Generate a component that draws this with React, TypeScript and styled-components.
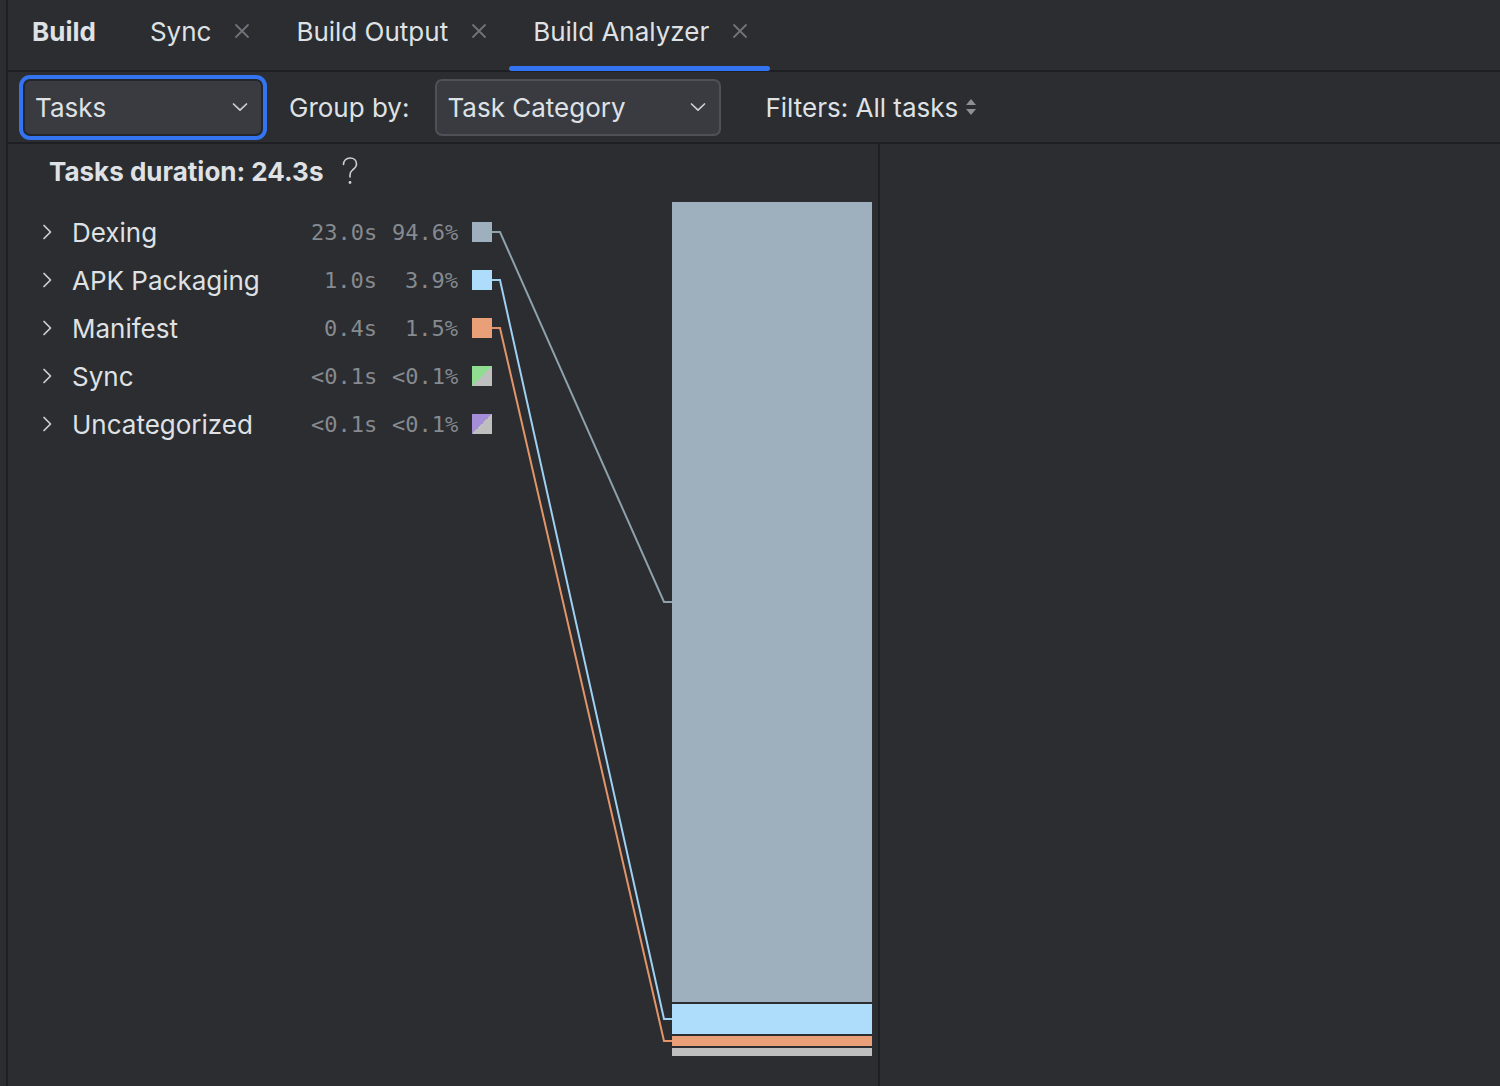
import React from "react";
import styled, { createGlobalStyle } from "styled-components";

const Global = createGlobalStyle`
  html, body { margin: 0; padding: 0; background: #2b2d30; }
  body { font-family: Inter, "Noto Sans", sans-serif; color: #dfe1e5; }
  * { box-sizing: border-box; }
`;

const Frame = styled.div`
  display: flex;
  width: 1500px;
  height: 1086px;
  background: #2b2d30;
  overflow: hidden;
`;

const Gutter = styled.div`
  flex: none;
  width: 8px;
  border-right: 2px solid #1e1f22;
`;

const Main = styled.div`
  flex: 1;
  min-width: 0;
  display: flex;
  flex-direction: column;
`;

/* ---------- tabs ---------- */
const TabBar = styled.div`
  flex: none;
  display: flex;
  height: 72px;
  border-bottom: 2px solid #1e1f22;
`;

const TabTitle = styled.div`
  height: 62px;
  display: flex;
  align-items: center;
  padding: 0 30px 0 24px;
  font-size: 26px;
  font-weight: 700;
  color: #dfe1e5;
`;

const Tab = styled.div`
  display: flex;
  flex-direction: column;
  height: 70px;
`;

const TabLabel = styled.div`
  height: 62px;
  display: flex;
  align-items: center;
  gap: 23px;
  padding: 0 22px 0 24px;
  font-size: 26px;
  color: #dfe1e5;
  white-space: nowrap;
`;

const Underline = styled.div<{ $active?: boolean }>`
  margin-top: auto;
  margin-bottom: -1px;
  height: 5px;
  border-radius: 3px;
  background: ${(p) => (p.$active ? "#3574f0" : "transparent")};
`;

const CloseIcon = () => (
  <svg width="16" height="16" viewBox="0 0 16 16">
    <path d="M2 2 L14 14 M14 2 L2 14" stroke="#6f737a" strokeWidth="1.8" strokeLinecap="round" />
  </svg>
);

/* ---------- toolbar ---------- */
const Toolbar = styled.div`
  flex: none;
  display: flex;
  align-items: center;
  gap: 26px;
  height: 72px;
  padding-left: 15px;
  border-bottom: 2px solid #1e1f22;
`;

const Combo = styled.div<{ $w: number; $focused?: boolean }>`
  width: ${(p) => p.$w}px;
  height: 57px;
  display: flex;
  align-items: center;
  justify-content: space-between;
  padding: 0 13px 0 10px;
  border-radius: 7px;
  background: #393b40;
  border: 2px solid ${(p) => (p.$focused ? "#23262b" : "#4e5157")};
  box-shadow: ${(p) => (p.$focused ? "0 0 0 4px #3574f0" : "none")};
  font-size: 26px;
  color: #dfe1e5;
`;

const ToolLabel = styled.span<{ $push?: number }>`
  font-size: 26px;
  color: #dfe1e5;
  margin-left: ${(p) => p.$push ?? 0}px;
  display: flex;
  align-items: center;
  gap: 7px;
  white-space: nowrap;
`;

const ChevronDown = () => (
  <svg width="16" height="10" viewBox="0 0 16 10">
    <path d="M1.5 2 L8 8.2 L14.5 2" fill="none" stroke="#ced0d6" strokeWidth="1.7" strokeLinecap="round" strokeLinejoin="round" />
  </svg>
);

const UpDown = () => (
  <svg width="12" height="18" viewBox="0 0 12 18">
    <path d="M6 1 L11 7 L1 7 Z" fill="#8c8f94" />
    <path d="M6 17 L11 11 L1 11 Z" fill="#8c8f94" />
  </svg>
);

/* ---------- content ---------- */
const Content = styled.div`
  flex: 1;
  display: flex;
  min-height: 0;
`;

const LeftPanel = styled.div`
  flex: none;
  width: 872px;
  border-right: 2px solid #1e1f22;
  display: flex;
  flex-direction: column;
`;

const RightPanel = styled.div`
  flex: 1;
`;

const Header = styled.div`
  height: 54px;
  display: flex;
  align-items: center;
  gap: 18px;
  padding-left: 41px;
  font-size: 26px;
  font-weight: 700;
  color: #dfe1e5;
`;

const HelpIcon = () => (
  <svg width="18" height="30" viewBox="0 0 18 30">
    <path d="M2.5 8.5 C2.5 4.5 5.5 2 9 2 C12.8 2 15.5 4.5 15.5 8 C15.5 11 13.5 12.5 11.5 14 C10 15.2 9 16.5 9 19 L9 21"
      fill="none" stroke="#ced0d6" strokeWidth="1.6" strokeLinecap="round" />
    <circle cx="9" cy="26.5" r="1.4" fill="#ced0d6" />
  </svg>
);

const ChartRow = styled.div`
  margin-top: 4px;
  display: flex;
  align-items: flex-start;
`;

const TaskList = styled.div`
  flex: none;
  width: 484px;
  padding-top: 6px;
  display: flex;
  flex-direction: column;
`;

const TaskRow = styled.div`
  height: 48px;
  display: flex;
  align-items: center;
  padding-left: 34px;
`;

const RowChevron = styled.svg`
  flex: none;
  margin-right: 20px;
`;

const TaskName = styled.span`
  flex: 1;
  font-size: 26px;
  color: #dfe1e5;
  white-space: nowrap;
`;

const Num = styled.span<{ $gap?: number }>`
  flex: none;
  width: 66px;
  margin-left: ${(p) => p.$gap ?? 0}px;
  text-align: right;
  font-family: "DejaVu Sans Mono", "Liberation Mono", monospace;
  font-size: 22px;
  color: #868a91;
  white-space: nowrap;
`;

const Swatch = styled.span<{ $bg: string }>`
  flex: none;
  width: 20px;
  height: 20px;
  margin-left: 14px;
  background: ${(p) => p.$bg};
`;

const Connectors = styled.svg`
  flex: none;
  display: block;
`;

const Bar = styled.div`
  flex: none;
  width: 200px;
  display: flex;
  flex-direction: column;
  gap: 2px;
`;

const Segment = styled.div<{ $h: number; $c: string }>`
  height: ${(p) => p.$h}px;
  background: ${(p) => p.$c};
`;

const tasks = [
  { name: "Dexing", dur: "23.0s", pct: "94.6%", color: "#9eb0bd" },
  { name: "APK Packaging", dur: "1.0s", pct: "3.9%", color: "#aedcfb" },
  { name: "Manifest", dur: "0.4s", pct: "1.5%", color: "#e9a079" },
  { name: "Sync", dur: "<0.1s", pct: "<0.1%", color: "linear-gradient(135deg, #90dd92 50%, #bfbfbf 50%)" },
  { name: "Uncategorized", dur: "<0.1s", pct: "<0.1%", color: "linear-gradient(135deg, #a48ed8 50%, #bfbfbf 50%)" },
];

const segments = [
  { h: 800, c: "#9eb0bd" },
  { h: 30, c: "#aedcfb" },
  { h: 10, c: "#e9a079" },
  { h: 8, c: "#bfbfbf" },
];

const links = [
  { y0: 30, y1: 400, c: "#8fa1ad" },
  { y0: 78, y1: 817, c: "#9fd1f2" },
  { y0: 126, y1: 839, c: "#e39569" },
];

export default function App() {
  return (
    <>
      <Global />
      <Frame>
        <Gutter />
        <Main>
          <TabBar>
            <TabTitle>Build</TabTitle>
            <Tab>
              <TabLabel>
                Sync <CloseIcon />
              </TabLabel>
              <Underline />
            </Tab>
            <Tab>
              <TabLabel>
                Build Output <CloseIcon />
              </TabLabel>
              <Underline />
            </Tab>
            <Tab>
              <TabLabel>
                Build Analyzer <CloseIcon />
              </TabLabel>
              <Underline $active />
            </Tab>
          </TabBar>

          <Toolbar>
            <Combo $w={240} $focused>
              <span>Tasks</span>
              <ChevronDown />
            </Combo>
            <ToolLabel>Group by:</ToolLabel>
            <Combo $w={286}>
              <span>Task Category</span>
              <ChevronDown />
            </Combo>
            <ToolLabel $push={18}>
              Filters: All tasks <UpDown />
            </ToolLabel>
          </Toolbar>

          <Content>
            <LeftPanel>
              <Header>
                <span>Tasks duration: 24.3s</span>
                <HelpIcon />
              </Header>
              <ChartRow>
                <TaskList>
                  {tasks.map((t) => (
                    <TaskRow key={t.name}>
                      <RowChevron width="10" height="16" viewBox="0 0 10 16">
                        <path d="M2 1.5 L8.5 8 L2 14.5" fill="none" stroke="#ced0d6" strokeWidth="1.7" strokeLinecap="round" strokeLinejoin="round" />
                      </RowChevron>
                      <TaskName>{t.name}</TaskName>
                      <Num>{t.dur}</Num>
                      <Num $gap={15}>{t.pct}</Num>
                      <Swatch $bg={t.color} />
                    </TaskRow>
                  ))}
                </TaskList>
                <Connectors width="180" height="854" viewBox="0 0 180 854">
                  {links.map((l, i) => (
                    <polyline
                      key={i}
                      points={`0,${l.y0} 8,${l.y0} 172,${l.y1} 180,${l.y1}`}
                      fill="none"
                      stroke={l.c}
                      strokeWidth="2"
                    />
                  ))}
                </Connectors>
                <Bar>
                  {segments.map((s, i) => (
                    <Segment key={i} $h={s.h} $c={s.c} />
                  ))}
                </Bar>
              </ChartRow>
            </LeftPanel>
            <RightPanel />
          </Content>
        </Main>
      </Frame>
    </>
  );
}
